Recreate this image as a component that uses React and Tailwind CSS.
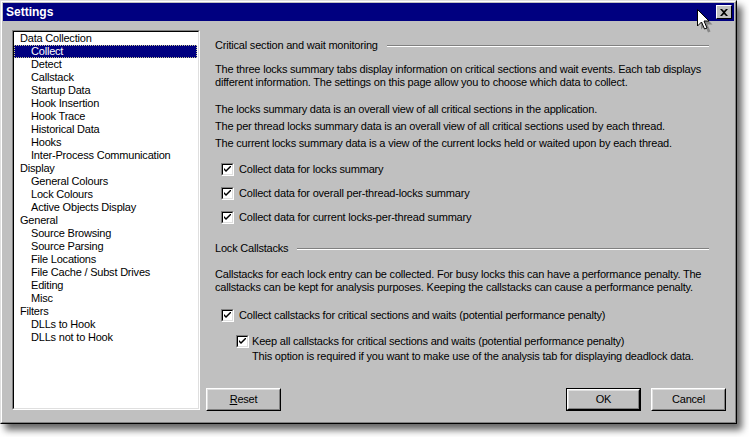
import React from 'react';

const tree = [
  { label: 'Data Collection', level: 0 },
  { label: 'Collect', level: 1, selected: true },
  { label: 'Detect', level: 1 },
  { label: 'Callstack', level: 1 },
  { label: 'Startup Data', level: 1 },
  { label: 'Hook Insertion', level: 1 },
  { label: 'Hook Trace', level: 1 },
  { label: 'Historical Data', level: 1 },
  { label: 'Hooks', level: 1 },
  { label: 'Inter-Process Communication', level: 1 },
  { label: 'Display', level: 0 },
  { label: 'General Colours', level: 1 },
  { label: 'Lock Colours', level: 1 },
  { label: 'Active Objects Display', level: 1 },
  { label: 'General', level: 0 },
  { label: 'Source Browsing', level: 1 },
  { label: 'Source Parsing', level: 1 },
  { label: 'File Locations', level: 1 },
  { label: 'File Cache / Subst Drives', level: 1 },
  { label: 'Editing', level: 1 },
  { label: 'Misc', level: 1 },
  { label: 'Filters', level: 0 },
  { label: 'DLLs to Hook', level: 1 },
  { label: 'DLLs not to Hook', level: 1 },
];

function CheckBox() {
  return (
    <div className="w-[13px] h-[13px] shrink-0 border border-t-[#808080] border-l-[#808080] border-b-white border-r-white">
      <div className="w-full h-full bg-white border border-t-black border-l-black border-b-[#dfdfdf] border-r-[#dfdfdf] flex items-center justify-center">
        <svg width="7" height="7" viewBox="0 0 7 7">
          <path d="M0 2 L0 4 L2 6 L7 1 L7 -1 L2 4 Z" fill="#000" />
        </svg>
      </div>
    </div>
  );
}

function Heading({ children }) {
  return (
    <div className="flex items-center h-[13px] leading-[13px]">
      <span className="shrink-0">{children}</span>
      <div className="flex-1 ml-[9px] h-0 border-t border-t-[#808080] border-b border-b-white" />
    </div>
  );
}

function Button({ children, isDefault, className = '' }) {
  return (
    <div className={`w-[75px] h-[23px] ${isDefault ? 'border border-black' : ''} ${className}`}>
      <div className="w-full h-full border border-t-white border-l-white border-b-black border-r-black">
        <div className="w-full h-full border border-t-[#dfdfdf] border-l-[#dfdfdf] border-b-[#808080] border-r-[#808080] flex items-center justify-center">
          {children}
        </div>
      </div>
    </div>
  );
}

export default function App() {
  return (
    <div className="relative w-[749px] h-[437px] bg-white overflow-hidden font-['Liberation_Sans','Arial',sans-serif] text-[11px] tracking-[-0.2px] text-black">
      <div className="w-[737px] h-[424px] bg-[#c0c0c0] border border-t-[#dfdfdf] border-l-[#dfdfdf] border-b-black border-r-black shadow-[5px_6px_7px_rgba(0,0,0,0.6)]">
        <div className="w-full h-full border border-t-white border-l-white border-b-[#808080] border-r-[#808080] p-px flex flex-col">
          {/* title bar */}
          <div className="h-[18px] bg-[#000080] flex items-center justify-between pl-[3px] pr-[2px]">
            <span className="text-white font-bold text-[12px] tracking-normal leading-[18px]">Settings</span>
            <div className="w-[16px] h-[14px] bg-[#c0c0c0] border border-t-white border-l-white border-b-black border-r-black flex items-center justify-center">
              <svg width="8" height="7" viewBox="0 0 8 7">
                <path d="M0 0 H2 L4 2 L6 0 H8 L5 3.5 L8 7 H6 L4 5 L2 7 H0 L3 3.5 Z" fill="#000" />
              </svg>
            </div>
          </div>

          {/* body */}
          <div className="flex pt-[9px] pl-[9px]">
            {/* tree */}
            <div className="w-[188px] h-[380px] shrink-0 border border-t-[#808080] border-l-[#808080] border-b-white border-r-white">
              <div className="w-full h-full bg-white border border-t-black border-l-black border-b-[#dfdfdf] border-r-[#dfdfdf] pr-px">
                {tree.map((t) => (
                  <div
                    key={t.label}
                    className={`h-[13px] leading-[13px] whitespace-nowrap ${t.level === 0 ? 'pl-[6px]' : 'pl-[17px]'} ${t.selected ? 'bg-[#000080] text-white outline outline-1 outline-dotted outline-[#c8c890] -outline-offset-1' : ''}`}
                  >
                    {t.label}
                  </div>
                ))}
              </div>
            </div>

            {/* right side */}
            <div className="w-[520px] h-[381px] ml-[6px] flex flex-col">
              <div className="pl-[9px] w-[503px] pt-[9px] whitespace-nowrap">
                <Heading>Critical section and wait monitoring</Heading>

                <div className="mt-[11px] leading-[13px]">
                  <div>The three locks summary tabs display information on critical sections and wait events. Each tab displays</div>
                  <div>different information. The settings on this page allow you to choose which data to collect.</div>
                </div>

                <div className="mt-[12px] leading-[17px]">
                  <div>The locks summary data is an overall view of all critical sections in the application.</div>
                  <div>The per thread locks summary data is an overall view of all critical sections used by each thread.</div>
                  <div>The current locks summary data is a view of the current locks held or waited upon by each thread.</div>
                </div>

                <div className="mt-[5px] pl-[6px]">
                  {[
                    'Collect data for locks summary',
                    'Collect data for overall per-thread-locks summary',
                    'Collect data for current locks-per-thread summary',
                  ].map((l) => (
                    <div key={l} className="h-[24px] flex items-center gap-[5px]">
                      <CheckBox />
                      <span>{l}</span>
                    </div>
                  ))}
                </div>

                <div className="mt-[13px]">
                  <Heading>Lock Callstacks</Heading>
                </div>

                <div className="mt-[13px] leading-[13px]">
                  <div>Callstacks for each lock entry can be collected. For busy locks this can have a performance penalty. The</div>
                  <div>callstacks can be kept for analysis purposes. Keeping the callstacks can cause a performance penalty.</div>
                </div>

                <div className="mt-[9px] pl-[6px] h-[24px] flex items-center gap-[5px]">
                  <CheckBox />
                  <span>Collect callstacks for critical sections and waits (potential performance penalty)</span>
                </div>

                <div className="mt-[7px] pl-[21px] flex gap-[3px]">
                  <div className="pt-px">
                    <CheckBox />
                  </div>
                  <div className="leading-[15px]">
                    <div>Keep all callstacks for critical sections and waits (potential performance penalty)</div>
                    <div>This option is required if you want to make use of the analysis tab for displaying deadlock data.</div>
                  </div>
                </div>
              </div>

              <div className="mt-auto flex items-end">
                <Button>
                  <span><span className="underline">R</span>eset</span>
                </Button>
                <div className="flex-1" />
                <Button isDefault>OK</Button>
                <Button className="ml-[10px]">Cancel</Button>
              </div>
            </div>
          </div>
        </div>
      </div>

      {/* mouse cursor */}
      <svg className="absolute left-[697px] top-[9px]" width="16" height="24" viewBox="0 0 16 24">
        <path d="M2.5 2.5 L2.5 19 L6.5 15 L9.5 22 L12 21 L9 14 L14 14 Z" fill="rgba(0,0,0,0.3)" transform="translate(1.5 1.5)" />
        <path d="M0.5 0.5 L0.5 17 L4.5 13 L7.5 20 L10 19 L7 12 L12 12 Z" fill="#fff" stroke="#000" strokeWidth="1" strokeLinejoin="miter" />
      </svg>
    </div>
  );
}
